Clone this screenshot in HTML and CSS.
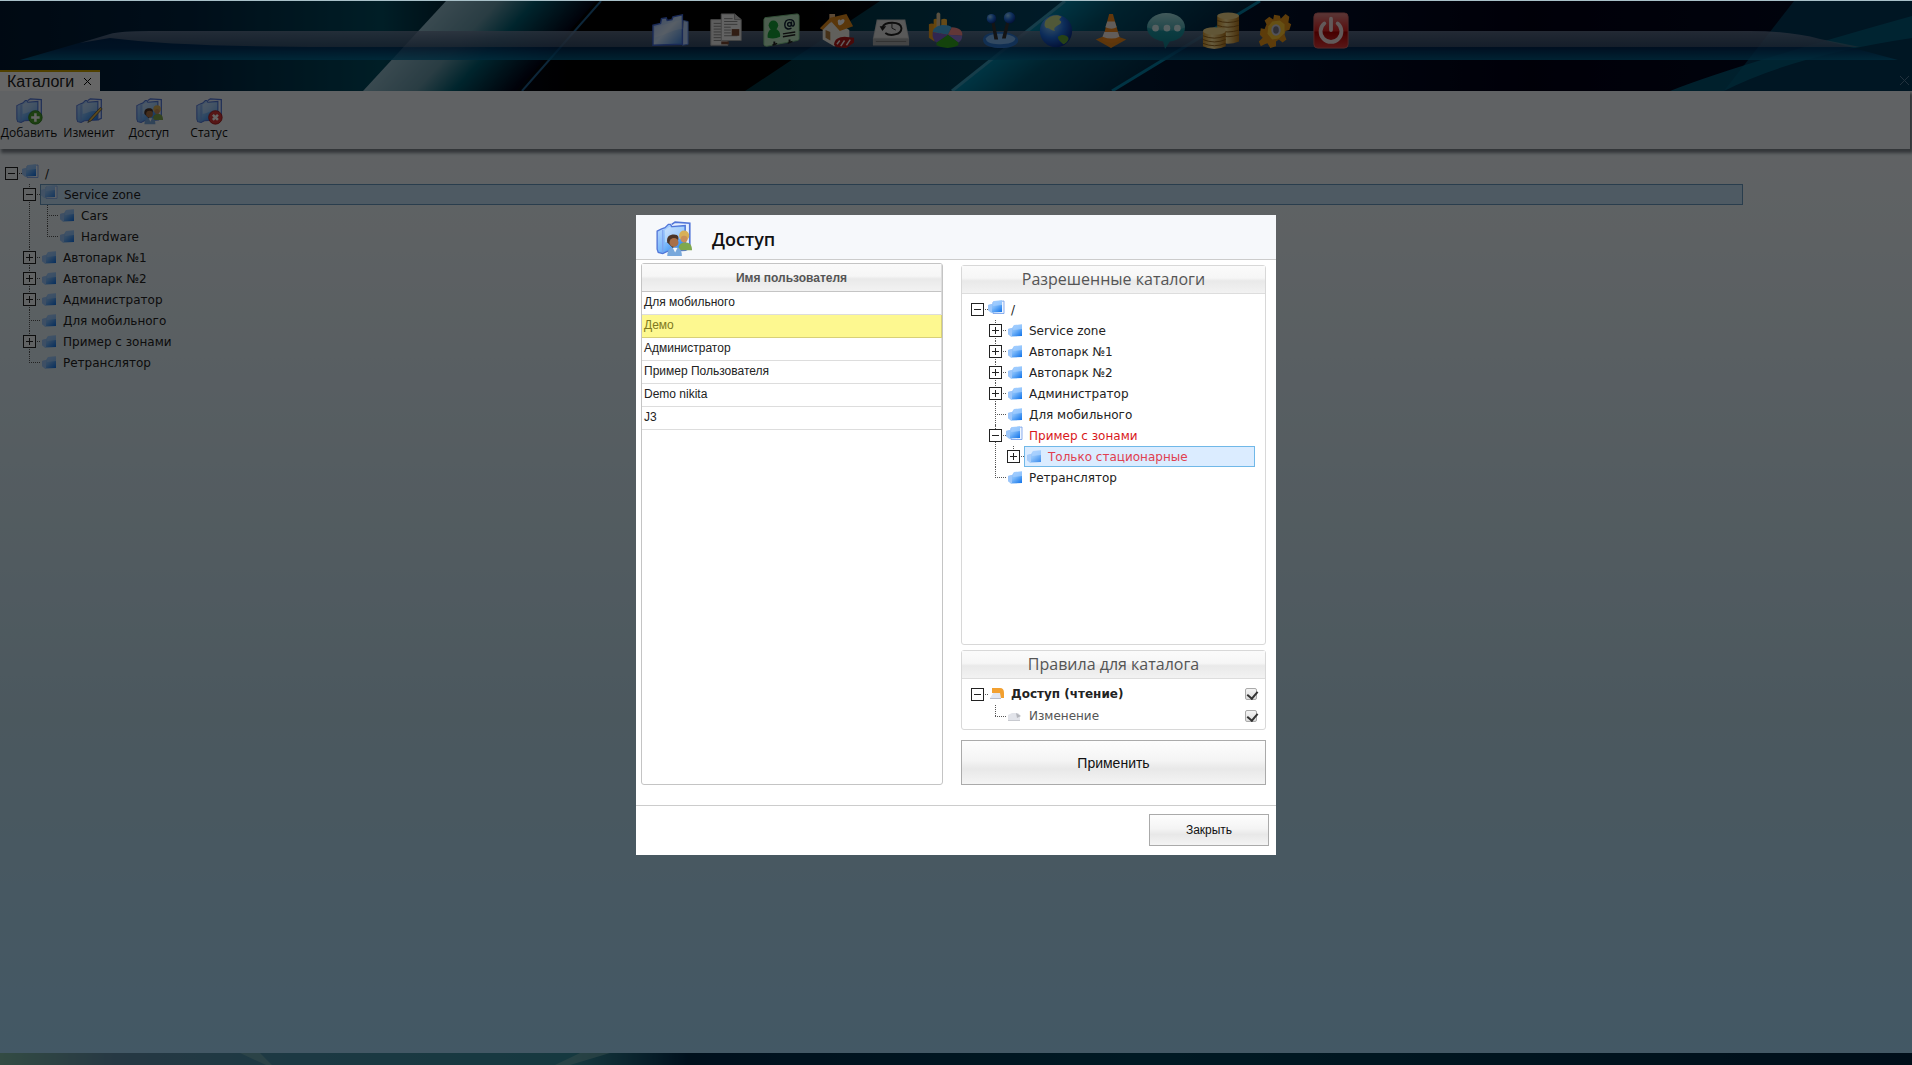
FILE: index.html
```
<!DOCTYPE html>
<html lang="ru">
<head>
    <meta charset="UTF-8">
    <meta name="viewport" content="width=device-width, initial-scale=1.0">
    <title>Каталоги</title>
    <link rel="stylesheet" href="styles.css">
</head>

<body>
    <svg class="sprite" aria-hidden="true">
        <defs>
            <linearGradient id="blue" x1="0" y1="0" x2="1" y2="1">
                <stop offset="0" stop-color="#c4dcff"/>
                <stop offset=".5" stop-color="#7ab8fa"/>
                <stop offset="1" stop-color="#0c70e8"/>
            </linearGradient>
            <linearGradient id="paleBlue" x1="0" y1="0" x2="1" y2="1">
                <stop offset="0" stop-color="#8fb4fb"/>
                <stop offset=".5" stop-color="#cfe6ff"/>
                <stop offset="1" stop-color="#3d86e4"/>
            </linearGradient>
            <linearGradient id="gold" x1="0" y1="0" x2="1" y2="0">
                <stop offset="0" stop-color="#d99a2e"/>
                <stop offset=".4" stop-color="#ffe59a"/>
                <stop offset="1" stop-color="#b8791a"/>
            </linearGradient>
            <linearGradient id="redBox" x1="0" y1="0" x2="0" y2="1">
                <stop offset="0" stop-color="#e08a8a"/>
                <stop offset=".5" stop-color="#d22"/>
                <stop offset=".55" stop-color="#b00000"/>
                <stop offset="1" stop-color="#e03a3a"/>
            </linearGradient>
            <radialGradient id="sea" cx=".35" cy=".3" r=".8">
                <stop offset="0" stop-color="#8fd0ff"/>
                <stop offset=".5" stop-color="#1f6fe0"/>
                <stop offset="1" stop-color="#05207a"/>
            </radialGradient>
            <linearGradient id="bubble" x1="0" y1="0" x2="0" y2="1">
                <stop offset="0" stop-color="#8fd8dc"/>
                <stop offset=".5" stop-color="#1d98a4"/>
                <stop offset="1" stop-color="#0f7d8c"/>
            </linearGradient>
        </defs>

        <symbol id="leaf" viewBox="0 0 14 13">
            <path d="M0 5l4-1 2-3 8-.5V12L3 12.500 0 10z" fill="url(#blue)"/>
            <path d="M0 5l4-1v8l-1 .5L0 10z" fill="#9cc6fa"/>
            <path d="M6 1l8-.5V5L5 6z" fill="#a4ceff" opacity=".7"/>
        </symbol>
        <symbol id="open" viewBox="0 0 17 15">
            <path d="M5 2l11-1v12.500H5z" fill="#eef5ff" stroke="#6f9be8" stroke-width=".8"/>
            <path d="M0 5l4-1 2-3 8-.5V12L3 12.500 0 10z" fill="url(#blue)"/>
            <path d="M0 5l4-1v8l-1 .5L0 10z" fill="#9cc6fa"/>
            <path d="M6 1l8-.5V5L5 6z" fill="#a4ceff" opacity=".7"/>
        </symbol>
        <symbol id="folders" viewBox="0 0 32 32">
            <path d="M14 3l3-2 13 1v22l-4 2" fill="#e6f0ff" stroke="#5276d8" stroke-width="1.5"/>
            <path d="M1 9l4-2 3-1 3-3h2l1 2 12-1v22l-16 1-4 2-4-1-1-3z" fill="url(#blue)" stroke="#5276d8" stroke-width="1.2"/>
            <path d="M8 8l4-3 2 1 11-1v11c-6-2-11 2-17 3z" fill="#fff" opacity=".35"/>
            <path d="M6 8v20" stroke="#7da0ec" stroke-width="1"/>
        </symbol>
        <symbol id="people" viewBox="0 0 32 32">
            <use href="#folders"/>
            <path d="M20 26c0-5 2-7 6-7s6 2 6 7z" fill="#7fa84e"/>
            <circle cx="25" cy="13" r="4.500" fill="#d8b058"/>
            <circle cx="25" cy="16" r="3" fill="#c98f5a"/>
            <path d="M10 31c0-6 3-8 7-8s6 3 6 8z" fill="#78a8dc"/>
            <path d="M10 19c-1-5 2-7 6-7s5 3 3 6l-4 6z" fill="#4b3427"/>
            <circle cx="16" cy="19" r="4" fill="#a87048"/>
            <path d="M15 24l2 4 2-4z" fill="#f4f7fb"/>
        </symbol>

        <symbol id="t-folder" viewBox="0 0 40 40">
            <path d="M33 9l5 1v24l-6 1" fill="#b8d4ff" stroke="#4f7de0"/>
            <path d="M1 14l8-2 1-5 5-1 1 3 5-1 1-3 10-2v31l-31 1z" fill="url(#paleBlue)" stroke="#3f67d6" stroke-width="1.5"/>
            <path d="M3 16l29-8v10c-10 0-16 6-29 9z" fill="#fff" opacity=".25"/>
        </symbol>
        <symbol id="t-docs" viewBox="0 0 40 40">
            <path d="M4 8h12l6 5v22H4z" fill="#e8e8e8" stroke="#aaa"/>
            <path d="M7 12h10M7 15h12M7 18h12M7 21h12M7 24h12M7 27h12M7 30h8" stroke="#888"/>
            <path d="M15 2h14l7 6v22H15z" fill="#f6f6f6" stroke="#aaa"/>
            <path d="M29 2v6h7" fill="#ccc" stroke="#999"/>
            <path d="M18 7h9M18 10h14M18 13h14M18 16h7M18 19h7M18 22h7M18 25h14" stroke="#888"/>
            <path d="M26 18h8v7h-8z" fill="#7a4a34"/>
            <path d="M15 31h8v3h-8z" fill="#7a4a34"/>
        </symbol>
        <symbol id="t-card" viewBox="0 0 40 40">
            <path d="M3 6l34-4q2 0 2 2v24q0 2-2 2L5 36q-3 0-3-2V8z" fill="#bfe8c4" stroke="#7fc98a"/>
            <circle cx="12" cy="14" r="5" fill="#18a038"/>
            <path d="M6 27c-1-6 3-10 6-10s8 3 7 9q-6 3-13 1z" fill="#18a038"/>
            <circle cx="29" cy="13" r="2" fill="none" stroke="#123" stroke-width="1.500"/>
            <path d="M31 10v4q2 2 3-1c0-4-3-5-5-5-4 0-5 3-5 6s3 5 7 3" fill="none" stroke="#123" stroke-width="1.500"/>
            <path d="M22 23l13-2M22 26l13-2M11 35l5-2M27 33l5-2" stroke="#222" stroke-width="1.500"/>
            <path d="M13 31v4M29 29v3" stroke="#222" stroke-width="2"/>
        </symbol>
        <symbol id="t-house" viewBox="0 0 40 40">
            <path d="M6 15l10-8 18 12v14l-16 3-12-7z" fill="#f3efe6"/>
            <path d="M13 2h6v7l-6 3z" fill="#e6b784"/>
            <path d="M3 17L14 6 31 2l7 13-14 5-9-10-9 9z" fill="#e28a1c"/>
            <path d="M9 19l5 2v9l-5-3z" fill="#b07a3c"/>
            <path d="M22 11c-1-3 2-4 3-2 1-2 4-2 4 0 0 3-4 5-5 5s-2-1-2-3z" fill="#fff"/>
            <path d="M18 34c0-5 5-8 11-8l10 1v5l-8 6-10-1q-3-1-3-3z" fill="#b01818"/>
            <path d="M21 34l3-4M25 36l4-6M31 35l4-6" stroke="#f6eaea" stroke-width="1.500"/>
        </symbol>
        <symbol id="t-drive" viewBox="0 0 40 40">
            <path d="M5 8h30l4 20v7H1v-7z" fill="#c2c4c6"/>
            <path d="M6 9h28l4 18H2z" fill="#dedede"/>
            <path d="M1 28h38v7H1z" fill="#a9abad"/>
            <path d="M11 16c2-6 19-7 20 1 0 7-12 9-17 5" fill="none" stroke="#222" stroke-width="2"/>
            <path d="M8 15h7l-4 5z" fill="#222"/>
            <path d="M21 12v5l4 2" fill="none" stroke="#333"/>
            <path d="M4 31h32" stroke="#777"/>
        </symbol>
        <symbol id="t-chart" viewBox="0 0 40 40">
            <path d="M2 13q3-2 6 0v18l-6-4z" fill="#f0a020"/>
            <path d="M15 8q3-2 6 0v16h-6z" fill="#ffb83a"/>
            <path d="M7 8q2-2 4 0v18H7z" fill="#ffb020"/>
            <path d="M10 2q2-3 4 0v24h-4z" fill="#e0c8a0"/>
            <path d="M22 24L6 21c1-8 15-9 20-5z" fill="#49b2ea"/>
            <path d="M22 24l4-8c8 0 12 4 11 9z" fill="#f48a8a"/>
            <path d="M22 24l15 1q0 5-4 7z" fill="#8f78d8"/>
            <path d="M22 24l-12 8v3q12 6 23 0v-3z" fill="#33a81e"/>
            <path d="M22 24L6 21q-1 8 4 11z" fill="#7a60c8"/>
        </symbol>
        <symbol id="t-joystick" viewBox="0 0 40 40">
            <path d="M1 29c0-6 9-8 18-8s18 3 19 8c1 6-9 9-18 9S1 36 1 29z" fill="#2b77d0"/>
            <path d="M4 28c2-4 9-5 15-5s15 2 16 5c0 4-8 6-15 6S4 33 4 28z" fill="#7db6f2"/>
            <path d="M10 11l3 18h4L13 10zM29 10l-4 18h-4l5-19z" fill="#333"/>
            <circle cx="10" cy="7" r="5" fill="url(#sea)"/>
            <circle cx="29" cy="6" r="6" fill="url(#sea)"/>
        </symbol>
        <symbol id="t-globe" viewBox="0 0 40 40">
            <circle cx="20" cy="20" r="17" fill="url(#sea)"/>
            <path d="M9 9c5-6 13-7 17-4-2 2-3 2-2 4 3 1 1 4-2 5-3 2-5 3-3 6-4 0-6-4-9-3-3-2-2-5-1-8z" fill="#c8dc8c"/>
            <path d="M22 26c4-3 9-2 11 1 1 3-3 6-5 7-2-2-6-4-6-8z" fill="#5fa338"/>
        </symbol>
        <symbol id="t-cone" viewBox="0 0 40 40">
            <path d="M4 29l15-6 17 6-16 9z" fill="#e8881c"/>
            <path d="M18 2h4l8 28q-9 5-19 0z" fill="#f58a1c"/>
            <path d="M16 10h8l2 6q-5 3-12 0zM13 21h14l2 5q-8 4-18 0z" fill="#f4e8e0"/>
        </symbol>
        <symbol id="t-chat" viewBox="0 0 40 40">
            <path d="M20 1c12 0 20 7 20 15 0 9-7 14-16 15l-5 8-2-8C7 29 0 24 0 16 0 8 9 1 20 1z" fill="url(#bubble)"/>
            <path d="M20 1c12 0 20 7 20 15-8 5-28 5-40 0C1 8 9 1 20 1z" fill="#fff" opacity=".2"/>
            <circle cx="9" cy="17" r="3.500" fill="#d8f0f2"/>
            <circle cx="21" cy="17" r="3.500" fill="#d8f0f2"/>
            <circle cx="32" cy="17" r="3.500" fill="#d8f0f2"/>
        </symbol>
        <symbol id="t-coins" viewBox="0 0 40 40">
            <path d="M16 4v27q11 5 23 0V4z" fill="url(#gold)"/>
            <ellipse cx="27.500" cy="4" rx="11.500" ry="3.500" fill="#f2d68a"/>
            <path d="M16 9q11 4 23 0M16 14q11 4 23 0M16 19q11 4 23 0M16 24q11 4 23 0" fill="none" stroke="#95631a"/>
            <path d="M1 20v16q12 6 24 0V20z" fill="url(#gold)"/>
            <ellipse cx="13" cy="20" rx="12" ry="4" fill="#f2d68a"/>
            <path d="M1 25q12 5 24 0M1 29q12 5 24 0M1 33q12 5 24 0" fill="none" stroke="#95631a"/>
        </symbol>
        <symbol id="t-gear" viewBox="0 0 40 40">
            <path d="M17 8l1-5 6 1 1 3 5-5 4 3-1 6 3 2-2 6-4 1-1 4 2 5-4 3-4-3-3 2v5l-6 2-3-5-3 1-4 2-2-5 4-4-3-3 1-7 4 1 2-5-2-4 5-4z" fill="#e8961a"/>
            <path d="M16 10l8-1 5 4v9l-6 6-7 1-5-6 1-8z" fill="#ffc832"/>
            <ellipse cx="20" cy="19" rx="4" ry="5" fill="#778" stroke="#ccd" stroke-width="2"/>
        </symbol>
        <symbol id="t-power" viewBox="0 0 40 40">
            <rect x="2" y="1" width="36" height="37" rx="4" fill="url(#redBox)" stroke="#c66"/>
            <path d="M13 12a11 11 0 1 0 14 0M20 7v12" fill="none" stroke="#f4e2e2" stroke-width="4" stroke-linecap="round"/>
        </symbol>
    </svg>

    <header class="top">
        <!-- wallpaper and the glass shelf under the icons -->
        <svg class="wallpaper" viewBox="0 0 1912 90" preserveAspectRatio="none" aria-hidden="true">
            <defs>
                <linearGradient id="night">
                    <stop offset="0" stop-color="#001830"/>
                    <stop offset=".1" stop-color="#002440"/>
                    <stop offset=".2" stop-color="#004c60"/>
                    <stop offset=".26" stop-color="#000818"/>
                    <stop offset=".3" stop-color="#000"/>
                    <stop offset=".42" stop-color="#000"/>
                    <stop offset=".56" stop-color="#001c38"/>
                    <stop offset=".8" stop-color="#000016"/>
                    <stop offset="1" stop-color="#000c24"/>
                </linearGradient>
                <linearGradient id="beam" gradientUnits="userSpaceOnUse" x1="446" y1="0" x2="527" y2="75">
                    <stop offset="0" stop-color="#90b8c8"/>
                    <stop offset=".35" stop-color="#6898a8"/>
                    <stop offset=".6" stop-color="#005c70"/>
                    <stop offset="1" stop-color="#000418"/>
                </linearGradient>
                <linearGradient id="teal">
                    <stop offset="0" stop-color="#003440"/>
                    <stop offset="1" stop-color="#004464"/>
                </linearGradient>
                <linearGradient id="wave" gradientUnits="userSpaceOnUse" x1="1065" y1="0" x2="1141" y2="95">
                    <stop offset="0" stop-color="#0084a8"/>
                    <stop offset=".3" stop-color="#005470"/>
                    <stop offset="1" stop-color="#002440"/>
                </linearGradient>
                <linearGradient id="shelfTop" x1="0" y1="0" x2="0" y2="1">
                    <stop offset="0" stop-color="#a0a8b8" stop-opacity=".55"/>
                    <stop offset="1" stop-color="#687080" stop-opacity=".5"/>
                </linearGradient>
                <linearGradient id="shelfBottom" x1="0" y1="0" x2="0" y2="1">
                    <stop offset="0" stop-color="#00285c" stop-opacity=".6"/>
                    <stop offset=".6" stop-color="#003464" stop-opacity=".8"/>
                    <stop offset="1" stop-color="#006c98" stop-opacity=".8"/>
                </linearGradient>
            </defs>
            <path d="M0 0h1912v90H0z" fill="url(#night)"/>
            <path d="M446 0h150l-80 90H363z" fill="url(#beam)"/>
            <path d="M601 0l-79 90" stroke="#206090" stroke-width="2"/>
            <path d="M880 0h185L955 90H745z" fill="url(#teal)"/>
            <path d="M1065 0h195l-150 90H952z" fill="url(#wave)"/>
            <path d="M1065 0L952 90" stroke="#3898b8" stroke-width="3"/>
            <path d="M1260 0l-148 90" stroke="#0080a8" stroke-width="3"/>
            <path d="M1794 0h118v90h-188z" fill="#003858"/>
            <path d="M1912 15v22q-120 18-188 53h-54q60-24 242-75z" fill="#006484" opacity=".8"/>
            <path d="M20 59L110 33q10-3 40-3h1600q40 0 70 8l78 21z" fill="url(#shelfBottom)"/>
            <path d="M80 42l30-9q10-3 40-3h1600q40 0 70 8l40 8H330q-150 0-220-9z" fill="url(#shelfTop)"/>
        </svg>

        <nav class="dock">
            <button aria-label="Каталоги"><svg><use href="#t-folder"/></svg></button>
            <button aria-label="Документы"><svg><use href="#t-docs"/></svg></button>
            <button aria-label="Контакты"><svg><use href="#t-card"/></svg></button>
            <button aria-label="Дом"><svg><use href="#t-house"/></svg></button>
            <button aria-label="История"><svg><use href="#t-drive"/></svg></button>
            <button aria-label="Отчеты"><svg><use href="#t-chart"/></svg></button>
            <button aria-label="Управление"><svg><use href="#t-joystick"/></svg></button>
            <button aria-label="Карта"><svg><use href="#t-globe"/></svg></button>
            <button aria-label="Работы"><svg><use href="#t-cone"/></svg></button>
            <button aria-label="Сообщения"><svg><use href="#t-chat"/></svg></button>
            <button aria-label="Оплата"><svg><use href="#t-coins"/></svg></button>
            <button aria-label="Настройки"><svg><use href="#t-gear"/></svg></button>
            <button aria-label="Выход"><svg><use href="#t-power"/></svg></button>
        </nav>

        <div class="tabs">
            <div class="tab">
                <span>Каталоги</span>
                <button class="close" aria-label="Закрыть вкладку"><svg viewBox="0 0 9 9"><path d="M1 1l7 7M8 1L1 8" stroke="#000"/></svg></button>
            </div>
            <button class="close" aria-label="Закрыть все"><svg viewBox="0 0 9 9"><path d="M0 0l9 9M9 0L0 9" stroke="#567c98"/></svg></button>
        </div>
    </header>

    <main class="workspace">
        <div class="toolbar">
            <button>
                <svg viewBox="0 0 32 32"><use href="#folders"/><circle cx="23" cy="23" r="8" fill="#4aa02c" stroke="#2c7a18"/><path d="M23 18v10M18 23h10" stroke="#fff" stroke-width="3"/></svg>
                <span>Добавить</span>
            </button>
            <button>
                <svg viewBox="0 0 32 32"><use href="#folders"/><path d="M14 29l2-4 13-14 2 2-13 14z" fill="#e8b848" stroke="#555"/></svg>
                <span>Изменит</span>
            </button>
            <button>
                <svg viewBox="0 0 32 32"><use href="#people"/></svg>
                <span>Доступ</span>
            </button>
            <button>
                <svg viewBox="0 0 32 32"><use href="#folders"/><circle cx="23" cy="23" r="8" fill="#d83838" stroke="#a01818"/><path d="M20 20l6 6M26 20l-6 6" stroke="#fff" stroke-width="3"/></svg>
                <span>Статус</span>
            </button>
        </div>

        <ul class="tree tree-main">
            <li>
                <div class="row"><span class="joint"><button class="minus" aria-label="Свернуть"></button></span><a href="#"><svg class="open"><use href="#open"/></svg>/</a></div>
                <ul>
                    <li>
                        <div class="row"><span class="joint"><button class="minus" aria-label="Свернуть"></button></span><a href="#" class="selected"><svg class="open"><use href="#open"/></svg>Service zone</a></div>
                        <ul>
                            <li><div class="row"><span class="joint"></span><a href="#"><svg><use href="#leaf"/></svg>Cars</a></div></li>
                            <li><div class="row"><span class="joint"></span><a href="#"><svg><use href="#leaf"/></svg>Hardware</a></div></li>
                        </ul>
                    </li>
                    <li><div class="row"><span class="joint"><button class="plus" aria-label="Развернуть"></button></span><a href="#"><svg><use href="#leaf"/></svg>Автопарк №1</a></div></li>
                    <li><div class="row"><span class="joint"><button class="plus" aria-label="Развернуть"></button></span><a href="#"><svg><use href="#leaf"/></svg>Автопарк №2</a></div></li>
                    <li><div class="row"><span class="joint"><button class="plus" aria-label="Развернуть"></button></span><a href="#"><svg><use href="#leaf"/></svg>Администратор</a></div></li>
                    <li><div class="row"><span class="joint"></span><a href="#"><svg><use href="#leaf"/></svg>Для мобильного</a></div></li>
                    <li><div class="row"><span class="joint"><button class="plus" aria-label="Развернуть"></button></span><a href="#"><svg><use href="#leaf"/></svg>Пример с зонами</a></div></li>
                    <li><div class="row"><span class="joint"></span><a href="#"><svg><use href="#leaf"/></svg>Ретранслятор</a></div></li>
                </ul>
            </li>
        </ul>
    </main>

    <footer class="bottom">
        <svg viewBox="0 0 1912 12" preserveAspectRatio="none" aria-hidden="true">
            <defs>
                <linearGradient id="floor">
                    <stop offset="0" stop-color="#80bca8"/>
                    <stop offset=".06" stop-color="#608ca8"/>
                    <stop offset=".15" stop-color="#4890a8"/>
                    <stop offset=".3" stop-color="#3890a0"/>
                    <stop offset=".36" stop-color="#002848"/>
                    <stop offset=".6" stop-color="#004058"/>
                    <stop offset="1" stop-color="#002440"/>
                </linearGradient>
            </defs>
            <path d="M0 0h1912v12H0z" fill="url(#floor)"/>
            <path d="M240 0h20l12 12h-6zM580 0h30l-40 12h-15z" fill="#80b8b8" opacity=".6"/>
        </svg>
    </footer>

    <div class="overlay">
        <div class="dialog" role="dialog" aria-labelledby="dialog-title">
            <div class="dialog-head">
                <svg viewBox="0 0 32 32"><use href="#people"/></svg>
                <h1 id="dialog-title">Доступ</h1>
            </div>

            <div class="dialog-body">
                <div class="users">
                    <table>
                        <thead>
                            <tr><th>Имя пользователя</th></tr>
                        </thead>
                        <tbody>
                            <tr><td>Для мобильного</td></tr>
                            <tr class="current"><td>Демо</td></tr>
                            <tr><td>Администратор</td></tr>
                            <tr><td>Пример Пользователя</td></tr>
                            <tr><td>Demo nikita</td></tr>
                            <tr><td>J3</td></tr>
                        </tbody>
                    </table>
                </div>

                <div class="rights">
                    <section class="panel catalogs">
                        <h2>Разрешенные каталоги</h2>
                        <ul class="tree">
                            <li>
                                <div class="row"><span class="joint"><button class="minus" aria-label="Свернуть"></button></span><a href="#"><svg class="open"><use href="#open"/></svg>/</a></div>
                                <ul>
                                    <li><div class="row"><span class="joint"><button class="plus" aria-label="Развернуть"></button></span><a href="#"><svg><use href="#leaf"/></svg>Service zone</a></div></li>
                                    <li><div class="row"><span class="joint"><button class="plus" aria-label="Развернуть"></button></span><a href="#"><svg><use href="#leaf"/></svg>Автопарк №1</a></div></li>
                                    <li><div class="row"><span class="joint"><button class="plus" aria-label="Развернуть"></button></span><a href="#"><svg><use href="#leaf"/></svg>Автопарк №2</a></div></li>
                                    <li><div class="row"><span class="joint"><button class="plus" aria-label="Развернуть"></button></span><a href="#"><svg><use href="#leaf"/></svg>Администратор</a></div></li>
                                    <li><div class="row"><span class="joint"></span><a href="#"><svg><use href="#leaf"/></svg>Для мобильного</a></div></li>
                                    <li>
                                        <div class="row"><span class="joint"><button class="minus" aria-label="Свернуть"></button></span><a href="#" class="allowed"><svg class="open"><use href="#open"/></svg>Пример с зонами</a></div>
                                        <ul>
                                            <li><div class="row"><span class="joint"><button class="plus" aria-label="Развернуть"></button></span><a href="#" class="allowed selected"><svg><use href="#leaf"/></svg>Только стационарные</a></div></li>
                                        </ul>
                                    </li>
                                    <li><div class="row"><span class="joint"></span><a href="#"><svg><use href="#leaf"/></svg>Ретранслятор</a></div></li>
                                </ul>
                            </li>
                        </ul>
                    </section>

                    <section class="panel rules">
                        <h2>Правила для каталога</h2>
                        <ul class="tree">
                            <li>
                                <div class="row">
                                    <span class="joint"><button class="minus" aria-label="Свернуть"></button></span>
                                    <label for="read"><svg viewBox="0 0 14 13"><path d="M2 0h8q4 0 4 5v5h-4V5H2z" fill="#f2a030"/><path d="M3 5h7l1 5H0l2-3z" fill="#e2e6f0"/><path d="M0 10h11v1H0z" fill="#b8bcc8"/></svg><b>Доступ (чтение)</b></label>
                                    <input type="checkbox" id="read" checked>
                                </div>
                                <ul>
                                    <li>
                                        <div class="row">
                                            <span class="joint"></span>
                                            <label for="edit"><svg viewBox="0 0 14 13"><path d="M0 5l4-2h6l2 2v5H0z" fill="#e2e4ea"/><path d="M8 3l5 3-4 2z" fill="#b4b6bc"/><path d="M0 10h12v1H0z" fill="#c8cad0"/></svg>Изменение</label>
                                            <input type="checkbox" id="edit" checked>
                                        </div>
                                    </li>
                                </ul>
                            </li>
                        </ul>
                    </section>

                    <button class="apply">Применить</button>
                </div>
            </div>

            <div class="dialog-foot">
                <button class="dismiss">Закрыть</button>
            </div>
        </div>
    </div>
</body>
</html>
```
FILE: styles.css
```
* {
    box-sizing: border-box;
}

body {
    margin: 0;
    min-height: 100vh;
    display: flex;
    flex-direction: column;
    border-top: 1px solid #a8c0c8;
    background: #001830;
    font-family: "Liberation Sans", Arial, sans-serif;
    font-size: 12px;
}

button {
    font-family: inherit;
    cursor: pointer;
}

ul {
    list-style: none;
    margin: 0;
    padding: 0;
}

.sprite {
    position: absolute;
    width: 0;
    height: 0;
}

/* top */

.top {
    position: relative;
    height: 90px;
    display: flex;
    flex-direction: column;
    justify-content: space-between;
}

.wallpaper {
    position: absolute;
    inset: 0;
    width: 100%;
    height: 100%;
}

.dock {
    position: relative;
    display: flex;
    justify-content: center;
    padding: 11px 0 0 90px;
}

.dock button {
    width: 55px;
    height: 38px;
    padding: 0;
    border: 0;
    background: none;
}

.dock svg {
    width: 38px;
    height: 38px;
}

.tabs {
    position: relative;
    display: flex;
    justify-content: space-between;
    align-items: center;
    padding-right: 3px;
}

.tab {
    display: flex;
    align-items: center;
    width: 100px;
    height: 21px;
    padding-left: 7px;
    gap: 9px;
    border-top: 2px solid #c8a000;
    background: #fff;
    font-size: 16px;
    color: #222;
}

.close {
    width: 9px;
    height: 9px;
    padding: 0;
    border: 0;
    background: none;
}

.close svg {
    display: block;
    width: 9px;
    height: 9px;
}

/* workspace */

.workspace {
    flex: 1;
    background: linear-gradient(#f2f9fd, #eef5f9 10%, #bcdcec 65%, #a8dcfc);
}

.toolbar {
    display: flex;
    height: 58px;
    margin-right: 2px;
    padding-top: 6px;
    background: #eff6fa;
    box-shadow: 2px 3px 3px 1px #808890;
    clip-path: inset(0 -2px -8px 0);
}

.toolbar button {
    display: flex;
    flex-direction: column;
    align-items: center;
    width: 60px;
    padding: 1px 2px 0 0;
    border: 0;
    background: none;
    font-family: "Open Sans", "Noto Sans", sans-serif;
    font-size: 12px;
    line-height: 16px;
    color: #111;
    white-space: nowrap;
}

.toolbar svg {
    width: 27px;
    height: 27px;
    flex: none;
}

/* tree */

.tree {
    font-family: Verdana, "DejaVu Sans", sans-serif;
    font-size: 12px;
    color: #222;
}

.tree-main {
    margin: 14px 169px 0 5px;
}

.tree ul {
    padding-left: 18px;
}

.tree li {
    position: relative;
}

.tree ul > li::before {
    content: "";
    position: absolute;
    top: 0;
    bottom: 0;
    left: 6px;
    border-left: 1px dotted #555;
}

.tree ul > li:last-child::before {
    bottom: auto;
    height: 11px;
}

.row {
    position: relative;
    display: flex;
    align-items: center;
    height: 21px;
}

.joint {
    position: relative;
    flex: none;
    width: 17px;
    height: 13px;
}

.joint::before {
    content: "";
    position: absolute;
    top: 6px;
    left: 6px;
    right: 0;
    border-top: 1px dotted #555;
}

.joint button {
    position: relative;
    display: block;
    width: 13px;
    height: 13px;
    padding: 0;
    border: 1px solid #222;
    background: linear-gradient(#222, #222) center / 7px 1px no-repeat, #fff;
}

.joint .plus {
    background: linear-gradient(#222, #222) center / 7px 1px no-repeat, linear-gradient(#222, #222) center / 1px 7px no-repeat, #fff;
}

.tree-main .joint button {
    background-color: #f0f4f8;
}

.row a,
.row label {
    flex: 1;
    display: flex;
    align-items: center;
    height: 21px;
    color: inherit;
    text-decoration: none;
    white-space: nowrap;
}

.row svg {
    width: 14px;
    height: 13px;
    margin: 0 7px 0 2px;
}

.row svg.open {
    width: 17px;
    height: 15px;
    margin: 0 6px 4px 0;
}

.row .selected {
    border: 1px solid #70b8e8;
    background: #dbecff;
}

.row .selected svg {
    opacity: .8;
}

.tree-main .selected {
    border-color: #6898c0;
    background: #c4e0f8;
}

.row .allowed {
    color: #d8181c;
}

.row .allowed.selected {
    color: #e04050;
}

/* dialog */

.overlay {
    position: fixed;
    inset: 1px 0 0;
    display: flex;
    align-items: center;
    justify-content: center;
    padding-top: 4px;
    background: rgba(0, 0, 0, .6);
}

.dialog {
    display: flex;
    flex-direction: column;
    width: 640px;
    height: 640px;
    background: #fff;
}

.dialog-head {
    display: flex;
    align-items: center;
    gap: 20px;
    height: 45px;
    padding: 3px 20px 0;
    border-bottom: 1px solid #ccc;
    background: #f6f8fb;
}

.dialog-head svg {
    width: 36px;
    height: 36px;
}

.dialog-head h1 {
    margin: 0;
    font: 600 18px/26px "Open Sans", "Noto Sans", sans-serif;
    color: #111;
}

.dialog-body {
    flex: 1;
    display: flex;
    gap: 18px;
    padding: 3px 10px 20px 5px;
}

.users {
    width: 302px;
    border: 1px solid #c4c4c4;
    border-radius: 3px;
}

.users table {
    width: 100%;
    border-collapse: separate;
    border-spacing: 0;
}

.users th {
    height: 28px;
    padding: 1px 0 0;
    border-bottom: 1px solid #c4c4c4;
    border-right: 1px solid #ddd;
    background: linear-gradient(#fafafa, #f6f6f6 45%, #e9e9e9 55%, #f2f2f2);
    color: #555;
}

.users td {
    height: 23px;
    padding: 0 0 2px 2px;
    border-bottom: 1px solid #ddd;
    border-right: 1px solid #ddd;
    color: #222;
}

.users .current td {
    border-color: #d8d078;
    background: #fdf890;
    color: #807820;
}

.rights {
    flex: 1;
    display: flex;
    flex-direction: column;
    padding-top: 2px;
}

.panel {
    border: 1px solid #d8d8d8;
    border-radius: 3px;
}

.panel h2 {
    height: 28px;
    margin: 0;
    border-bottom: 1px solid #ddd;
    background: linear-gradient(#fbfbfb, #f6f6f6 45%, #e9e9e9 55%, #f2f2f2);
    font: 16px/26px "Open Sans", "Noto Sans", sans-serif;
    color: #555;
    text-align: center;
}

.panel .tree {
    padding: 5px 10px 0 9px;
}

.catalogs {
    flex: 1;
    margin-bottom: 5px;
}

.rules {
    height: 80px;
    margin-bottom: 10px;
}

.rules .tree {
    padding: 4px 8px 0 9px;
}

.rules .row {
    height: 22px;
}

.rules .row input {
    width: 12px;
    height: 12px;
    margin: 0;
    appearance: none;
    border: 1px solid #aaa;
    border-radius: 2px;
    background: linear-gradient(#f4f4f4, #ddd);
}

.rules .row input:checked::before {
    content: "";
    display: block;
    width: 5px;
    height: 8px;
    margin-left: 3px;
    border: solid #333;
    border-width: 0 2px 2px 0;
    transform: rotate(40deg);
}

.rules li li label {
    color: #555;
}

.apply,
.dismiss {
    border: 1px solid #aaa;
    background: linear-gradient(#fdfdfd, #f4f4f4 45%, #e8e8e8 65%, #f4f4f4);
    color: #111;
}

.apply {
    height: 45px;
    font-size: 14px;
}

.dialog-foot {
    display: flex;
    justify-content: flex-end;
    height: 50px;
    padding: 8px 7px;
    border-top: 1px solid #ccc;
}

.dismiss {
    width: 120px;
    height: 32px;
    font-size: 12px;
}

/* bottom */

.bottom {
    height: 12px;
}

.bottom svg {
    display: block;
    width: 100%;
    height: 12px;
}
```
